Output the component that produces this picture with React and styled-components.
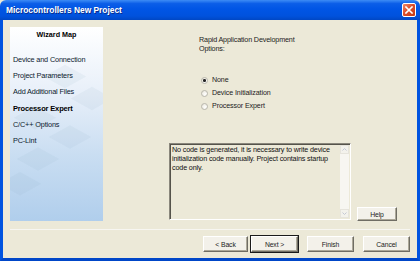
import React, { useState } from "react";
import styled, { createGlobalStyle, css } from "styled-components";

const GlobalStyle = createGlobalStyle`
    html, body {
        margin: 0;
        padding: 0;
        width: 420px;
        height: 261px;
        overflow: hidden;
        background: #ece9d8;
    }
    * {
        box-sizing: border-box;
    }
`;

const Window = styled.div`
    width: 420px;
    height: 261px;
    display: flex;
    flex-direction: column;
    font-family: "Liberation Sans", Arial, sans-serif;
    font-size: 7px;
    color: #000;
`;

const TitleBar = styled.div`
    height: 20px;
    flex: none;
    display: flex;
    align-items: center;
    justify-content: space-between;
    padding: 0 4px 0 6px;
    border-radius: 6px 6px 0 0;
    background: linear-gradient(
        to bottom,
        #3d8cf5 0%,
        #0b5ee8 18%,
        #0055e5 45%,
        #0052dd 80%,
        #0047c4 100%
    );
`;

const Title = styled.span`
    color: #fff;
    font-weight: bold;
    font-size: 8.4px;
    text-shadow: 1px 1px 0 #0a2d8a;
`;

const CloseButton = styled.div`
    width: 14px;
    height: 14px;
    border: 1px solid #fff;
    border-radius: 2px;
    background: linear-gradient(135deg, #f08a6c 0%, #dd4f2b 45%, #c23a16 100%);
    display: flex;
    align-items: center;
    justify-content: center;
`;

const Frame = styled.div`
    flex: 1;
    display: flex;
    flex-direction: column;
    border-left: 3px solid #0053e0;
    border-right: 3px solid #0053e0;
    border-bottom: 3px solid #0046c8;
    background: #ece9d8;
    padding: 7px 7px 0 7px;
`;

const Main = styled.div`
    height: 194px;
    display: flex;
`;

const Sidebar = styled.div`
    position: relative;
    width: 93px;
    flex: none;
    overflow: hidden;
    background: linear-gradient(to bottom, #ffffff 0%, #e7eff9 35%, #cadef2 65%, #b0ceec 100%);
    padding: 3px 0 0 3px;
`;

const Decor = styled.svg`
    position: absolute;
    left: 0;
    top: 0;
    width: 93px;
    height: 194px;
`;

const SideItems = styled.div`
    position: relative;
    display: flex;
    flex-direction: column;
`;

const SideHeader = styled.div`
    font-weight: bold;
    font-size: 7.2px;
    text-align: center;
    padding-right: 3px;
    height: 24.5px;
`;

const SideItem = styled.div`
    height: 16.4px;
    font-size: 7.3px;
    letter-spacing: -0.15px;
    color: #0c1a2e;
    ${(p) =>
        p.$active &&
        css`
            font-weight: bold;
            font-size: 7.5px;
            color: #000;
        `}
`;

const Pane = styled.div`
    flex: 1;
    display: flex;
    flex-direction: column;
`;

const Intro = styled.div`
    margin: 9px 0 0 96px;
    font-size: 7.2px;
    line-height: 8.5px;
    letter-spacing: -0.15px;
    color: #222;
`;

const RadioGroup = styled.div`
    margin: 23px 0 0 98px;
    display: flex;
    flex-direction: column;
    gap: 4.5px;
`;

const RadioRow = styled.label`
    display: flex;
    align-items: center;
    gap: 4px;
    height: 8.5px;
    font-size: 7.1px;
    letter-spacing: -0.1px;
    color: #222;
    cursor: default;
`;

const RadioDot = styled.span`
    width: 7px;
    height: 7px;
    border-radius: 50%;
    border: 1px solid #b9b7ad;
    background: radial-gradient(circle at 65% 65%, #ffffff 0%, #f1efe7 60%, #dcd9cc 100%);
    display: flex;
    align-items: center;
    justify-content: center;
    &::after {
        content: "";
        width: 2.5px;
        height: 2.5px;
        border-radius: 50%;
        background: ${(p) => (p.$checked ? "#222" : "transparent")};
    }
`;

const Bottom = styled.div`
    margin: auto 0 0 66px;
    display: flex;
    align-items: flex-end;
    gap: 6px;
`;

const Description = styled.div`
    width: 182px;
    height: 77px;
    margin-bottom: 1px;
    display: flex;
    border-top: 1px solid #8a877c;
    border-left: 1px solid #8a877c;
    border-right: 1px solid #ffffff;
    border-bottom: 1px solid #ffffff;
    box-shadow: inset 1px 1px 0 #55534b;
`;

const DescText = styled.div`
    flex: 1;
    padding: 1px 2px;
    font-size: 7.2px;
    line-height: 9px;
    letter-spacing: -0.15px;
    color: #111;
`;

const ScrollBar = styled.div`
    width: 9px;
    margin: 1px 1px 1px 0;
    display: flex;
    flex-direction: column;
    justify-content: space-between;
    background: #f7f6f1;
`;

const ScrollArrow = styled.div`
    height: 9px;
    display: flex;
    align-items: center;
    justify-content: center;
    background: #f3f2ec;
    border: 1px solid #e6e4dc;
`;

const Button = styled.button`
    width: ${(p) => p.$w || 47}px;
    height: 16px;
    padding: 0;
    font-family: "Liberation Sans", Arial, sans-serif;
    font-size: 6.8px;
    letter-spacing: -0.1px;
    color: #222;
    background: #f3f1ea;
    border-top: 1px solid #ffffff;
    border-left: 1px solid #ffffff;
    border-right: 1px solid #6f6d64;
    border-bottom: 1px solid #6f6d64;
    box-shadow: inset -1px -1px 0 #aca899;
    ${(p) =>
        p.$default &&
        css`
            outline: 1px solid #1a1a1a;
            outline-offset: 0;
        `}
`;

const HelpButton = styled(Button)`
    height: 14px;
`;

const Separator = styled.div`
    margin-top: 8px;
    height: 1px;
    background: #d3d0c4;
    border-bottom: 1px solid #f7f6f1;
`;

const Footer = styled.div`
    margin-top: 6px;
    display: flex;
    justify-content: flex-end;
    gap: 9px;
`;

const NavPair = styled.div`
    display: flex;
    gap: 3px;
`;

const steps = [
    "Device and Connection",
    "Project Parameters",
    "Add Additional Files",
    "Processor Expert",
    "C/C++ Options",
    "PC-Lint",
];

const options = ["None", "Device Initialization", "Processor Expert"];

const Diamond = ({ x, y, s }) => (
    <rect
        x={x - s / 2}
        y={y - s / 2}
        width={s}
        height={s}
        transform={`rotate(45 ${x} ${y})`}
        fill="#8aa3c0"
        opacity="0.09"
    />
);

const App = () => {
    const [choice, setChoice] = useState(0);
    return (
        <Window>
            <GlobalStyle />
            <TitleBar>
                <Title>Microcontrollers New Project</Title>
                <CloseButton>
                    <svg width="8" height="8" viewBox="0 0 8 8">
                        <path d="M1 1 L7 7 M7 1 L1 7" stroke="#fff" strokeWidth="1.6" strokeLinecap="square" />
                    </svg>
                </CloseButton>
            </TitleBar>
            <Frame>
                <Main>
                    <Sidebar>
                        <Decor viewBox="0 0 93 194">
                            <g transform="scale(1 0.55)">
                                <Diamond x={55} y={90} s={30} />
                                <Diamond x={82} y={130} s={30} />
                                <Diamond x={25} y={165} s={30} />
                                <Diamond x={60} y={200} s={30} />
                                <Diamond x={28} y={240} s={30} />
                                <Diamond x={10} y={285} s={30} />
                            </g>
                        </Decor>
                        <SideItems>
                            <SideHeader>Wizard Map</SideHeader>
                            {steps.map((s, i) => (
                                <SideItem key={s} $active={i === 3}>
                                    {s}
                                </SideItem>
                            ))}
                        </SideItems>
                    </Sidebar>
                    <Pane>
                        <Intro>
                            Rapid Application Development
                            <br />
                            Options:
                        </Intro>
                        <RadioGroup>
                            {options.map((o, i) => (
                                <RadioRow key={o} onClick={() => setChoice(i)}>
                                    <RadioDot $checked={choice === i} />
                                    {o}
                                </RadioRow>
                            ))}
                        </RadioGroup>
                        <Bottom>
                            <Description>
                                <DescText>
                                    No code is generated, it is necessary to write device initialization code
                                    manually. Project contains startup code only.
                                </DescText>
                                <ScrollBar>
                                    <ScrollArrow>
                                        <svg width="5" height="3" viewBox="0 0 5 3">
                                            <path d="M0.5 2.5 L2.5 0.5 L4.5 2.5" fill="none" stroke="#c4c8d4" strokeWidth="1" />
                                        </svg>
                                    </ScrollArrow>
                                    <ScrollArrow>
                                        <svg width="5" height="3" viewBox="0 0 5 3">
                                            <path d="M0.5 0.5 L2.5 2.5 L4.5 0.5" fill="none" stroke="#c4c8d4" strokeWidth="1" />
                                        </svg>
                                    </ScrollArrow>
                                </ScrollBar>
                            </Description>
                            <HelpButton $w={40}>Help</HelpButton>
                        </Bottom>
                    </Pane>
                </Main>
                <Separator />
                <Footer>
                    <NavPair>
                        <Button $w={45}>&lt; Back</Button>
                        <Button $w={47} $default>
                            Next &gt;
                        </Button>
                    </NavPair>
                    <Button>Finish</Button>
                    <Button>Cancel</Button>
                </Footer>
            </Frame>
        </Window>
    );
};

export default App;
